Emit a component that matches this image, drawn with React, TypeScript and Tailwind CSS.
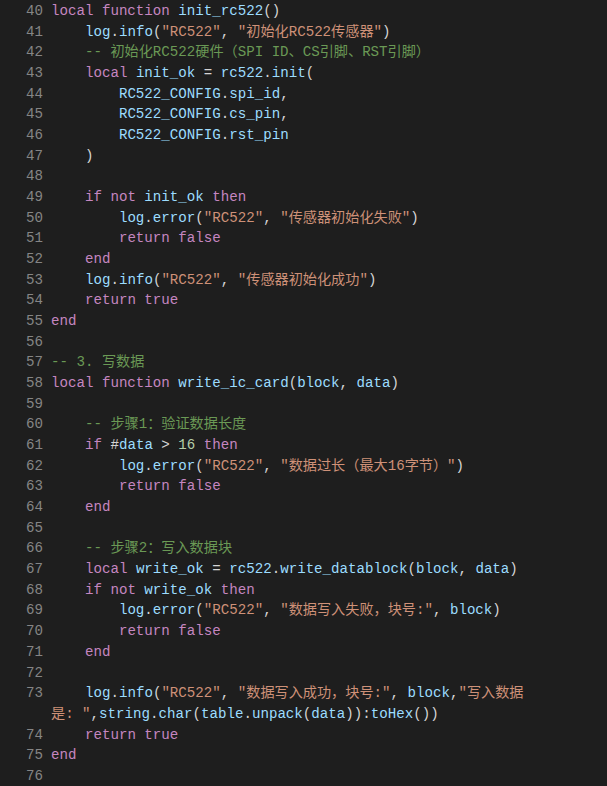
const K = "text-[#c586c0]";
const V = "text-[#9cdcfe]";
const S = "text-[#ce9178]";
const C = "text-[#6a9955]";
const N = "text-[#b5cea8]";
const P = "text-[#d4d4d4]";

type Tok = [string, string];
type Row = { n: string; indent: number; toks: Tok[] };

const row = (n: string, indent: number, ...toks: Tok[]): Row => ({ n, indent, toks });

const rows: Row[] = [
	row("40", 0, [K, "local function "], [V, "init_rc522"], [P, "()"]),
	row("41", 1, [V, "log"], [P, "."], [V, "info"], [P, "("], [S, '"RC522"'], [P, ", "], [S, '"初始化RC522传感器"'], [P, ")"]),
	row("42", 1, [C, "-- 初始化RC522硬件（SPI ID、CS引脚、RST引脚）"]),
	row("43", 1, [K, "local "], [V, "init_ok"], [P, " = "], [V, "rc522"], [P, "."], [V, "init"], [P, "("]),
	row("44", 2, [V, "RC522_CONFIG"], [P, "."], [V, "spi_id"], [P, ","]),
	row("45", 2, [V, "RC522_CONFIG"], [P, "."], [V, "cs_pin"], [P, ","]),
	row("46", 2, [V, "RC522_CONFIG"], [P, "."], [V, "rst_pin"]),
	row("47", 1, [P, ")"]),
	row("48", 0),
	row("49", 1, [K, "if not "], [V, "init_ok"], [K, " then"]),
	row("50", 2, [V, "log"], [P, "."], [V, "error"], [P, "("], [S, '"RC522"'], [P, ", "], [S, '"传感器初始化失败"'], [P, ")"]),
	row("51", 2, [K, "return false"]),
	row("52", 1, [K, "end"]),
	row("53", 1, [V, "log"], [P, "."], [V, "info"], [P, "("], [S, '"RC522"'], [P, ", "], [S, '"传感器初始化成功"'], [P, ")"]),
	row("54", 1, [K, "return true"]),
	row("55", 0, [K, "end"]),
	row("56", 0),
	row("57", 0, [C, "-- 3. 写数据"]),
	row("58", 0, [K, "local function "], [V, "write_ic_card"], [P, "("], [V, "block"], [P, ", "], [V, "data"], [P, ")"]),
	row("59", 0),
	row("60", 1, [C, "-- 步骤1：验证数据长度"]),
	row("61", 1, [K, "if "], [P, "#"], [V, "data"], [P, " > "], [N, "16"], [K, " then"]),
	row("62", 2, [V, "log"], [P, "."], [V, "error"], [P, "("], [S, '"RC522"'], [P, ", "], [S, '"数据过长（最大16字节）"'], [P, ")"]),
	row("63", 2, [K, "return false"]),
	row("64", 1, [K, "end"]),
	row("65", 0),
	row("66", 1, [C, "-- 步骤2：写入数据块"]),
	row("67", 1, [K, "local "], [V, "write_ok"], [P, " = "], [V, "rc522"], [P, "."], [V, "write_datablock"], [P, "("], [V, "block"], [P, ", "], [V, "data"], [P, ")"]),
	row("68", 1, [K, "if not "], [V, "write_ok"], [K, " then"]),
	row("69", 2, [V, "log"], [P, "."], [V, "error"], [P, "("], [S, '"RC522"'], [P, ", "], [S, '"数据写入失败，块号:"'], [P, ", "], [V, "block"], [P, ")"]),
	row("70", 2, [K, "return false"]),
	row("71", 1, [K, "end"]),
	row("72", 0),
	row("73", 1, [V, "log"], [P, "."], [V, "info"], [P, "("], [S, '"RC522"'], [P, ", "], [S, '"数据写入成功，块号:"'], [P, ", "], [V, "block"], [P, ","], [S, '"写入数据']),
	// editor soft-wrap of line 73
	row("", 0, [S, '是: "'], [P, ","], [V, "string"], [P, "."], [V, "char"], [P, "("], [V, "table"], [P, "."], [V, "unpack"], [P, "("], [V, "data"], [P, ")):"], [V, "toHex"], [P, "())"]),
	row("74", 1, [K, "return true"]),
	row("75", 0, [K, "end"]),
	row("76", 0),
];

export default function App() {
	return (
		<div className="h-[786px] w-[607px] overflow-hidden bg-[#1e1e1e] pt-[1px] font-['Liberation_Mono','Noto_Sans_CJK_SC',monospace] text-[14.15px] leading-[20.68px]">
			{rows.map((r, i) => (
				<div key={i} className="flex h-[20.68px] whitespace-pre">
					<span className="w-[43px] shrink-0 text-right text-[#858585]">{r.n}</span>
					<span className="ml-[8px]">
						{"    ".repeat(r.indent)}
						{r.toks.map(([cls, t], j) => (
							<span key={j} className={cls}>
								{t}
							</span>
						))}
					</span>
				</div>
			))}
		</div>
	);
}
